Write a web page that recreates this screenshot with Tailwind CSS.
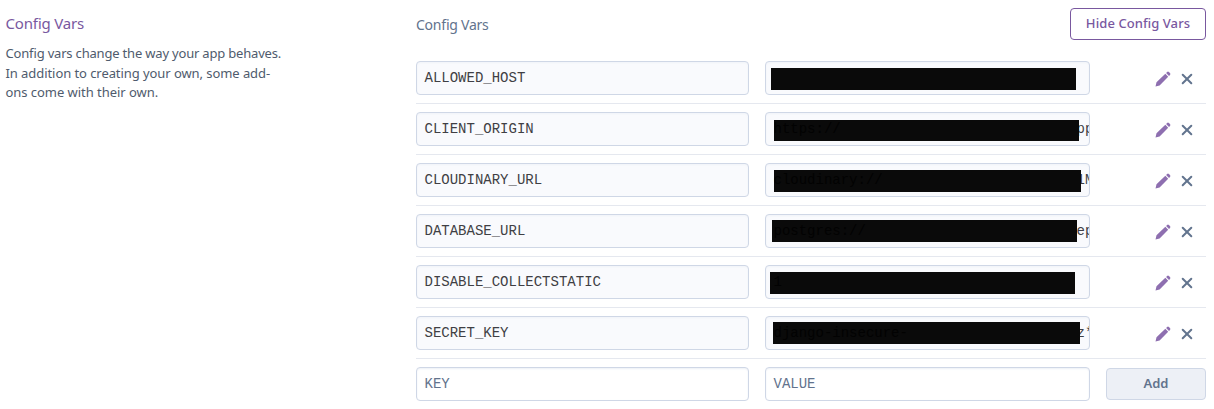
<!DOCTYPE html>
<html lang="en">
<head>
<meta charset="utf-8">
<title>Config Vars</title>
<script src="https://cdn.jsdelivr.net/npm/@tailwindcss/browser@4"></script>
</head>
<body class="bg-white w-[1214px] h-[409px] overflow-hidden flex font-['Noto_Sans',sans-serif] [font-feature-settings:'liga'_1,'dlig'_1]">
<svg class="hidden">
  <symbol id="pencil" viewBox="0 0 16 16"><path fill="#8e6fb0" d="M.5 15.5 1.5 11.3 10.3 2.8 13.2 5.7 4.6 14.4ZM11.1 2 12.1 1Q13 .2 13.9 1L15 2.1Q15.800 3 15 3.900L14 4.900Z"/></symbol>
  <symbol id="cross" viewBox="0 0 12 12"><path fill="none" stroke="#62748e" stroke-width="2" stroke-linecap="round" d="M1.700 1.700 10.300 10.300M10.300 1.700 1.700 10.300"/></symbol>
</svg>
<aside class="w-[416px] shrink-0 pl-[5.500px] pt-[11px]">
  <h2 class="text-[15px] leading-6 tracking-[-0.200px] text-[#79589f]">Config Vars</h2>
  <p class="mt-[9px] w-[290px] text-[13px] leading-[19.500px] text-[#4f5b6d]"><span class="tracking-[-0.190px]">Config vars change the way your app behaves.</span><br><span class="tracking-[-0.070px]">In addition to creating your own, some add-</span><br><span class="tracking-[-0.040px]">ons come with their own.</span></p>
</aside>
<main class="w-[790px] shrink-0">
  <header class="flex justify-between h-[53px] pt-2">
    <span class="text-[14px] leading-5 pt-[7px] tracking-[-0.270px] text-[#62738d]">Config Vars</span>
    <button class="w-[136px] h-8 rounded border border-[#79589f] text-[13px] font-medium tracking-[0.080px] text-[#79589f]">Hide Config Vars</button>
  </header>
  <div id="rows"></div>
  <div class="flex pt-2 font-['Liberation_Mono',monospace] text-[14px] text-[#62738d]">
    <div class="w-[333px] h-[34px] border border-[#cfd7e6] rounded pl-[7.500px] leading-[33px] shadow-[inset_0_1px_2px_#edf0f6]">KEY</div>
    <div class="ml-4 w-[325px] h-[34px] border border-[#cfd7e6] rounded pl-[7.500px] leading-[33px] shadow-[inset_0_1px_2px_#edf0f6]">VALUE</div>
    <button class="ml-4 mt-[1px] w-[100px] h-8 rounded border border-[#cfd7e6] bg-[#edf0f6] font-['Noto_Sans',sans-serif] text-[13px] font-semibold">Add</button>
  </div>
</main>
<script>
// key, scheme shown faintly on the mask, visible end of the value, mask left, mask top, mask width
const rows = [
  ['ALLOWED_HOST', '', '', 5, 6, 305],
  ['CLIENT_ORIGIN', 'https://', 'pp', 8, 6.5, 305],
  ['CLOUDINARY_URL', 'cloudinary://', '1M', 8, 6, 307],
  ['DATABASE_URL', 'postgres://', 'ep', 6, 5, 305],
  ['DISABLE_COLLECTSTATIC', '1', '', 4, 6, 305],
  ['SECRET_KEY', 'django-insecure-', 'z*', 7, 5, 307]
];
document.getElementById('rows').innerHTML = rows.map(([key, head, tail, x, y, w]) => `
  <div class="flex h-[51px] pt-2 border-b border-[#e5e8ef] font-['Liberation_Mono',monospace] text-[14px] text-[#3f3f44]">
    <div class="w-[333px] h-[34px] border border-[#cfd7e6] rounded bg-[#f9fafd] pl-[7.500px] leading-[33px] shadow-[inset_0_1px_2px_#f0f3f8]">${key}</div>
    <div class="relative overflow-hidden ml-4 w-[325px] h-[34px] border border-[#cfd7e6] rounded bg-[#f9fafd] pl-[310.500px] leading-[33px] shadow-[inset_0_1px_2px_#f0f3f8]">${tail}<span class="absolute h-[21.500px] bg-[#0a0a0a]" style="left:${x}px;top:${y}px;width:${w}px"></span><span class="absolute left-[7.500px] top-0 text-[#020202]">${head}</span></div>
    <div class="flex items-center ml-[65px] h-[36px] gap-[10px]">
      <svg class="w-4 h-4"><use href="#pencil"/></svg>
      <svg class="w-3 h-3"><use href="#cross"/></svg>
    </div>
  </div>`).join('');
</script>
</body>
</html>
